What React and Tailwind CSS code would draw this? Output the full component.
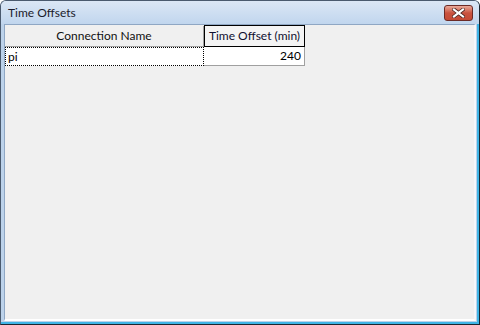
import React from "react";

export default function App() {
  return (
    <div
      className="w-[480px] h-[325px] flex flex-col bg-[#bcd2ea] border border-[#4a5a6e] border-r-[#1c2630] border-b-[#1c2630] rounded-t-[6px] overflow-hidden"
      style={{ fontFamily: 'Lato, "Noto Sans", sans-serif' }}
    >
      {/* title bar */}
      <div className="h-[23px] flex items-center justify-between pl-[7px] pr-[6px] bg-gradient-to-b from-[#dbe7f5] to-[#c1d6ee]">
        <span className="text-[12px] text-[#1b1b2b] leading-none pt-[1px]">Time Offsets</span>
        <button className="w-[29px] h-[16px] mt-[1px] rounded-[3px] border border-[#6b2a26] bg-gradient-to-b from-[#e9a99a] via-[#c9523f] to-[#c44a35] flex items-center justify-center">
          <svg width="13" height="10" viewBox="0 0 13 10">
            <path d="M2 1.5 L11 8.5 M11 1.5 L2 8.5" stroke="#4a2420" strokeWidth="3.6" strokeLinecap="square" />
            <path d="M2 1.5 L11 8.5 M11 1.5 L2 8.5" stroke="#ffffff" strokeWidth="2.2" strokeLinecap="square" />
          </svg>
        </button>
      </div>
      {/* frame body */}
      <div className="flex-1 flex pl-[3px] pr-[1px] pb-[1px] border-r-2 border-b-2 border-[#3fb4e6]">
        <div className="flex-1 border-l border-t border-[#8fa7c4] border-r-2 border-r-[#f4f7fb] bg-[#f0f0f0] border-b-2 border-b-white pt-[1px]">
          <div className="w-[300px] text-[12px] leading-none text-black">
            <div className="flex h-[21px]">
              <div className="w-[199px] flex items-center justify-center bg-[#f0f0f0] border-r border-b border-[#a0a0a0] text-[#101010]">
                Connection Name
              </div>
              <div className="w-[101px] flex items-center justify-center bg-[#f4f4f4] border border-black -mt-[1px] text-[#101030]">
                Time Offset (min)
              </div>
            </div>
            <div className="flex h-[19px]">
              <div className="w-[199px] flex items-center pl-[2px] bg-white border border-dotted border-black">pi</div>
              <div className="w-[101px] flex items-center justify-end pr-[3px] bg-white border-r border-b border-[#a0a0a0]">240</div>
            </div>
          </div>
        </div>
      </div>
    </div>
  );
}
